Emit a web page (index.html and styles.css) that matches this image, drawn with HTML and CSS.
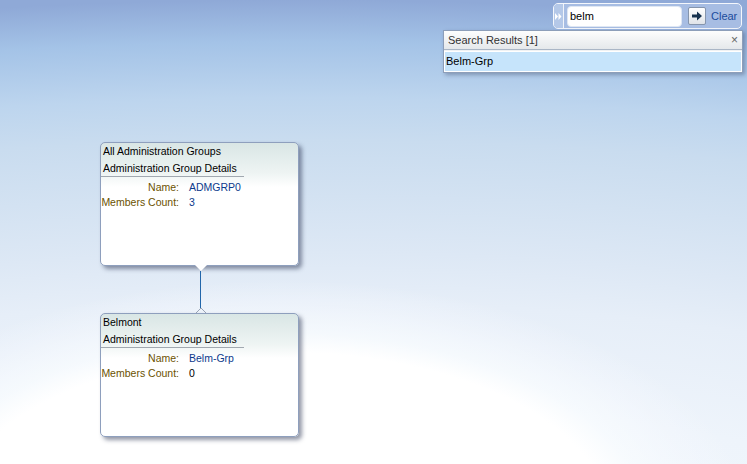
FILE: index.html
```html
<!DOCTYPE html>
<html lang="en">

<head>
    <meta charset="UTF-8">
    <title>Administration Groups</title>
    <link rel="stylesheet" href="styles.css">
</head>

<body>
    <div class="canvas">
        <div class="node node-top">
            <div class="node-title">All Administration Groups</div>
            <div class="node-section">Administration Group Details</div>
            <div class="node-rows">
                <span class="lbl">Name:</span><span class="val">ADMGRP0</span>
                <span class="lbl">Members Count:</span><span class="val">3</span>
            </div>
        </div>

        <div class="link">
            <span class="link-start"></span>
            <span class="link-line"></span>
            <span class="link-end"></span>
        </div>

        <div class="node node-bottom">
            <div class="node-title">Belmont</div>
            <div class="node-section">Administration Group Details</div>
            <div class="node-rows">
                <span class="lbl">Name:</span><span class="val">Belm-Grp</span>
                <span class="lbl">Members Count:</span><span class="val plain">0</span>
            </div>
        </div>

        <div class="search">
            <div class="search-bar">
                <div class="grip">
                    <svg width="7" height="7" viewBox="0 0 7 7"><path d="M0 0 L3 3.5 L0 7 Z M3.5 0 L6.5 3.5 L3.5 7 Z" fill="#fff"/></svg>
                </div>
                <input class="search-input" type="text" value="belm">
                <button class="go">
                    <svg width="12" height="10" viewBox="0 0 12 10"><path d="M1 3.5 H6 V0.5 L11 5 L6 9.5 V6.5 H1 Z" fill="#17324f"/></svg>
                </button>
                <a class="clear" href="#">Clear</a>
            </div>
            <div class="results">
                <div class="results-head">
                    <span>Search Results [1]</span>
                    <span class="close">&times;</span>
                </div>
                <div class="results-row">Belm-Grp</div>
            </div>
        </div>
    </div>
</body>

</html>
```

FILE: styles.css
```css
* {
    margin: 0;
    padding: 0;
    box-sizing: border-box;
}

body {
    font-family: "Liberation Sans", Arial, sans-serif;
    font-size: 11px;
    overflow: hidden;
}

/* wallpaper: white glow near the bottom over a wide blue sweep */
.canvas {
    position: relative;
    width: 747px;
    height: 464px;
    background:
        radial-gradient(ellipse 470px 240px at 280px 520px,
            #ffffff 0%,
            #ffffff 70%,
            rgba(250, 253, 255, 0.7) 78%,
            rgba(248, 250, 255, 0.35) 90%,
            rgba(255, 255, 255, 0) 100%),
        radial-gradient(ellipse 2000px 700px at 300px 700px,
            #f0f6fc 33%,
            #eef4fb 43%,
            #e6eef8 57%,
            #dde8f5 64%,
            #c9dcef 80%,
            #bdd5ee 86%,
            #a4c3e7 94%,
            #8fa9d7 100%);
}

/* diagram nodes */
.node {
    position: absolute;
    left: 100px;
    width: 199px;
    height: 124px;
    border: 1px solid #8e9fbd;
    border-radius: 5px;
    background: linear-gradient(#d9e6e5, #eef4f3 30px, #ffffff 44px);
    box-shadow: 3px 3px 4px rgba(40, 50, 80, 0.5);
    font-size: 10.5px;
    color: #000;
}

.node-top {
    top: 142px;
}

.node-bottom {
    top: 313px;
}

.node-title {
    height: 17px;
    line-height: 17px;
    padding-left: 2px;
}

.node-section {
    width: 143px;
    height: 17px;
    line-height: 16px;
    padding-left: 2px;
    border-bottom: 1px solid #a1a8b0;
}

.node-rows {
    display: grid;
    grid-template-columns: 78px auto;
    column-gap: 10px;
    row-gap: 1px;
    margin-top: 3px;
    line-height: 14px;
}

.lbl {
    text-align: right;
    color: #6b5200;
}

.val {
    color: #0c3a8c;
}

.val.plain {
    color: #000;
}

/* connector between nodes */
.link {
    position: absolute;
    left: 194px;
    top: 265px;
    width: 13px;
    height: 49px;
    display: flex;
    flex-direction: column;
    align-items: center;
}

.link-start {
    width: 0;
    height: 0;
    border-left: 6px solid transparent;
    border-right: 6px solid transparent;
    border-top: 6px solid #ffffff;
}

.link-line {
    flex: 1;
    width: 1px;
    background: #2266aa;
}

.link-end {
    width: 12px;
    height: 6px;
    background: linear-gradient(to top left, transparent 45%, #9aa5b5 46%, #9aa5b5 56%, transparent 57%) left / 6px 6px no-repeat,
        linear-gradient(to top right, transparent 45%, #9aa5b5 46%, #9aa5b5 56%, transparent 57%) right / 6px 6px no-repeat;
}

/* search widget */
.search {
    position: absolute;
    left: 443px;
    top: 3px;
    width: 300px;
}

.search-bar {
    display: flex;
    align-items: center;
    margin-left: 110px;
    width: 189px;
    height: 26px;
    border: 1px solid #f4f7fc;
    border-radius: 5px;
    background: #a7bde3;
}

.grip {
    width: 10px;
    height: 24px;
    display: flex;
    align-items: center;
    justify-content: center;
    border-right: 1px solid #f0f4fa;
    background: #b4c8e8;
    border-radius: 4px 0 0 4px;
}

.search-input {
    width: 115px;
    height: 21px;
    margin-left: 3px;
    border: 1px solid #dfe7f3;
    border-radius: 4px;
    background: #fff;
    padding-left: 2px;
    font-family: "Liberation Sans", Arial, sans-serif;
    font-size: 11px;
    color: #000;
    outline: none;
}

.go {
    width: 18px;
    height: 18px;
    margin-left: 6px;
    display: flex;
    align-items: center;
    justify-content: center;
    border: 1px solid #8595ad;
    border-radius: 2px;
    background: linear-gradient(#ffffff, #dfe3e8);
}

.clear {
    margin-left: 5px;
    color: #1b4c9c;
    text-decoration: none;
    font-size: 11px;
}

.results {
    margin-top: 1px;
    border: 1px solid #8d9eb9;
    background: #f0f2f4;
    box-shadow: 2px 2px 4px rgba(40, 50, 80, 0.35);
}

.results-head {
    display: flex;
    justify-content: space-between;
    align-items: center;
    height: 19px;
    padding: 0 4px 0 4px;
    background: linear-gradient(#fdfdfd, #e5e8eb);
    border-bottom: 1px solid #aab6c6;
    color: #333;
}

.close {
    color: #666;
    font-size: 12px;
}

.results-row {
    height: 21px;
    line-height: 19px;
    margin-top: 1px;
    padding-left: 1px;
    border: 1px solid #ffffff;
    background: #c6e4fb;
    color: #000;
}
```
